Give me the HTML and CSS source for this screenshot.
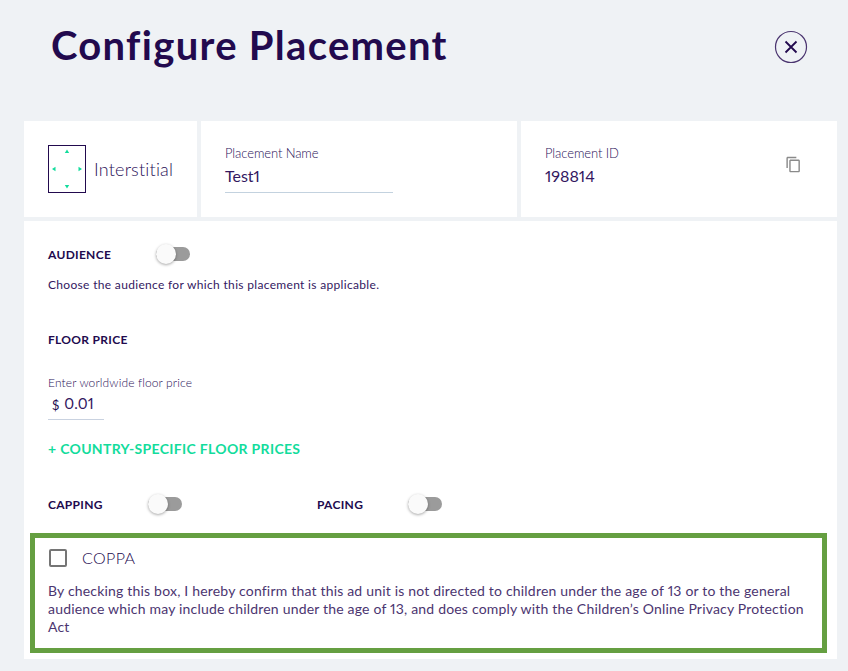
FILE: index.html
```html
<!DOCTYPE html>
<html lang="en">
<head>
<meta charset="utf-8">
<title>Configure Placement</title>
<link rel="stylesheet" href="styles.css">
</head>
<body>
<div class="page">
  <header class="header">
    <h1 class="title">Configure Placement</h1>
    <button class="close" type="button" aria-label="Close">
      <svg width="34" height="34" viewBox="0 0 34 34"><circle cx="17" cy="17" r="15.5" fill="none" stroke="#4b3570" stroke-width="1.2"/><path d="M11.5 11.5l11 11M22.5 11.5l-11 11" fill="none" stroke="#220a4e" stroke-width="1.8"/></svg>
    </button>
  </header>
  <section class="top-row">
    <div class="card type-card">
      <svg class="type-icon" width="38" height="48" viewBox="0 0 38 48">
        <rect x=".5" y=".5" width="37" height="47" fill="#fff" stroke="#220a4e"/>
        <path d="M19 4.500l2.200 3.500h-4.400zM19 43.500l-2.200-3.500h4.400zM4 24l3.500-2.200v4.400zM34 24l-3.500-2.200v4.400z" fill="#12dc9c"/>
      </svg>
      <span class="type-name">Interstitial</span>
    </div>
    <div class="card field-card">
      <div class="field-label">Placement Name</div>
      <div class="field-value underlined">Test1</div>
    </div>
    <div class="card id-card">
      <div>
        <div class="field-label">Placement ID</div>
        <div class="field-value">198814</div>
      </div>
      <svg class="copy" width="17" height="17" viewBox="0 0 24 24"><path fill="#8a8a8a" d="M16 1H4c-1.100 0-2 .9-2 2v14h2V3h12V1zm3 4H8c-1.100 0-2 .9-2 2v14c0 1.100.9 2 2 2h11c1.100 0 2-.9 2-2V7c0-1.100-.9-2-2-2zm0 16H8V7h11v14z"/></svg>
    </div>
  </section>
  <section class="card main-card">
    <div class="toggle-row audience-row">
      <span class="section-label label-audience">AUDIENCE</span>
      <span class="switch"><span class="knob"></span></span>
    </div>
    <p class="help">Choose the audience for which this placement is applicable.</p>
    <div class="section-label floor-label">FLOOR PRICE</div>
    <div class="floor-hint">Enter worldwide floor price</div>
    <div class="price"><span class="dollar">$</span><span class="amount">0.01</span></div>
    <div class="country-link">+ COUNTRY-SPECIFIC FLOOR PRICES</div>
    <div class="toggle-row limits-row">
      <span class="section-label label-capping">CAPPING</span>
      <span class="switch"><span class="knob"></span></span>
      <span class="section-label label-pacing">PACING</span>
      <span class="switch"><span class="knob"></span></span>
    </div>
    <div class="coppa">
      <div class="coppa-head">
        <span class="checkbox"></span>
        <span class="coppa-title">COPPA</span>
      </div>
      <p class="coppa-text">By checking this box, I hereby confirm that this ad unit is not directed to children under the age of 13 or to the general audience which may include children under the age of 13, and does comply with the Children’s Online Privacy Protection Act</p>
    </div>
  </section>
</div>
</body>
</html>
```
FILE: styles.css
```css
* { box-sizing: border-box; }
html, body { margin: 0; padding: 0; }
body {
  background: #eff2f5;
  color: #220a4e;
  font-family: Lato, "Liberation Sans", sans-serif;
  font-variant-numeric: proportional-nums;
  overflow: hidden;
}
.page { width: 848px; height: 671px; padding: 0 11px 0 24px; }
.header { height: 121px; display: flex; justify-content: space-between; align-items: flex-start; padding: 20px 29px 0 27px; }
.title { margin: 0; font-size: 40px; line-height: 50px; font-weight: 700; letter-spacing: 1.3px; color: #220a4e; }
.close { width: 34px; height: 34px; margin-top: 10px; padding: 0; border: 0; background: none; display: block; }
.close svg { display: block; }
.top-row { display: flex; gap: 4px; height: 96px; margin-bottom: 4px; }
.card { background: #fff; }
.type-card { width: 173px; display: flex; align-items: center; gap: 8px; padding: 0 0 0 24px; }
.type-icon { display: block; flex: none; }
.type-name { font-size: 18px; font-weight: 300; color: #2a1158; letter-spacing: 0.2px; }
.field-card { width: 316px; padding: 24px 0 0 24px; }
.id-card { width: 316px; padding: 24px 35px 0 24px; display: flex; justify-content: space-between; align-items: flex-start; }
.copy { margin-top: 11px; }
.field-label { font-size: 13px; line-height: 16px; font-weight: 300; color: #2a1158; letter-spacing: -0.1px; }
.field-value { font-size: 16px; line-height: 22px; margin-top: 4px; color: #33185f; }
.underlined { width: 168px; height: 28px; border-bottom: 1px solid #c3d2df; }
.main-card { height: 438px; padding: 24px 10px 0 24px; display: flex; flex-direction: column; }
.toggle-row { display: flex; align-items: center; }
.section-label { font-size: 12px; line-height: 20px; font-weight: 700; letter-spacing: 0.3px; color: #220a4e; }
.audience-row { height: 20px; }
.label-audience { width: 100px; }
.switch { position: relative; display: block; width: 34px; height: 14px; border-radius: 7px; background: #9b9b9b; }
.audience-row .switch { margin-left: 8px; margin-top: -2px; }
.knob { position: absolute; left: 0; top: -3px; width: 20px; height: 20px; border-radius: 50%; background: #fafafa; box-shadow: 0 1px 3px rgba(0,0,0,.35); }
.help { margin: 10px 0 0; font-size: 12px; line-height: 20px; color: #33185f; letter-spacing: 0.32px; }
.floor-label { margin-top: 35px; }
.floor-hint { margin-top: 25px; font-size: 12px; line-height: 16px; font-weight: 300; color: #2a1158; letter-spacing: 0.13px; }
.price { width: 56px; height: 29px; padding: 0 0 5px 4px; border-bottom: 1px solid #c9d2e0; display: flex; align-items: center; gap: 5px; }
.dollar { font-size: 13px; margin-top: 5px; color: #220a4e; }
.amount { font-size: 15px; color: #33185f; letter-spacing: 0.1px; }
.country-link { margin-top: 19px; font-size: 14px; line-height: 20px; font-weight: 700; letter-spacing: 0.32px; color: #12dc9c; }
.limits-row { margin-top: 36px; height: 20px; }
.label-capping { width: 100px; }
.label-pacing { width: 91px; margin-left: 135px; }
.limits-row .switch { margin-top: -2px; }
.coppa { width: 797px; height: 120px; margin: 18px 0 0 -18px; border: 5px solid #659f41; padding: 0 13px; }
.coppa-head { display: flex; align-items: center; height: 33px; margin-top: 3px; }
.checkbox { display: block; width: 18px; height: 18px; border: 2px solid #757575; border-radius: 2px; margin-left: 1px; }
.coppa-title { margin-left: 15px; font-size: 16px; font-weight: 300; color: #220a4e; letter-spacing: 0.4px; }
.coppa-text { margin: 8px 0 0; font-size: 14px; line-height: 18px; font-weight: 400; color: #4b3570; letter-spacing: 0.19px; }
```
